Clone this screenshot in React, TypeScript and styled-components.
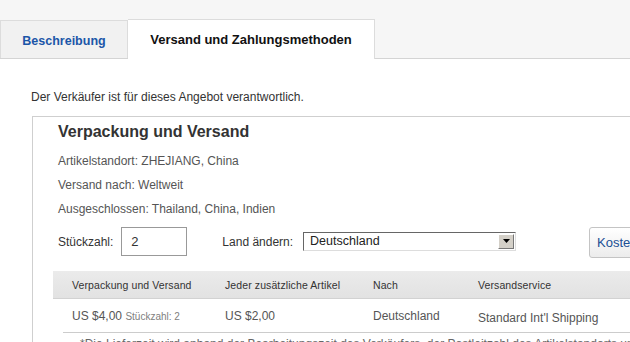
import styled, { createGlobalStyle } from "styled-components"

const GlobalStyle = createGlobalStyle`
  html, body {
    margin: 0;
    padding: 0;
    background: #fff;
    font-family: "Liberation Sans", Arial, sans-serif;
  }
`

const columns = [
  { label: "Verpackung und Versand", width: 153 },
  { label: "Jeder zusätzliche Artikel", width: 148 },
  { label: "Nach", width: 105 },
  { label: "Versandservice", width: 200 },
]

function App() {
  return (
    <>
      <GlobalStyle />
      <PageStyle>
        <TabBar>
          <Tab>Beschreibung</Tab>
          <Tab active>Versand und Zahlungsmethoden</Tab>
        </TabBar>

        <Content>
          <p className="seller">Der Verkäufer ist für dieses Angebot verantwortlich.</p>

          <ShippingBox>
            <h2>Verpackung und Versand</h2>
            <InfoLine>Artikelstandort: ZHEJIANG, China</InfoLine>
            <InfoLine>Versand nach: Weltweit</InfoLine>
            <InfoLine>Ausgeschlossen: Thailand, China, Indien</InfoLine>

            <FormRow>
              <label>Stückzahl:</label>
              <QtyInput defaultValue="2" />
              <label className="country">Land ändern:</label>
              <FakeSelect>
                <span>Deutschland</span>
                <div className="arrow">
                  <svg width="7" height="4" viewBox="0 0 7 4">
                    <path d="M0 0h7L3.5 4z" fill="#000" />
                  </svg>
                </div>
              </FakeSelect>
              <CostButton>Kosten berechnen</CostButton>
            </FormRow>

            <TableHead>
              {columns.map((c) => (
                <HeadCell key={c.label} width={c.width}>
                  {c.label}
                </HeadCell>
              ))}
            </TableHead>

            <TableRow>
              <Cell width={153}>
                US $4,00 <small>Stückzahl: 2</small>
              </Cell>
              <Cell width={148}>US $2,00</Cell>
              <Cell width={105}>Deutschland</Cell>
              <Cell width={200} shift={2}>
                Standard Int'l Shipping
              </Cell>
            </TableRow>

            <Footnote>
              *Die Lieferzeit wird anhand der Bearbeitungszeit des Verkäufers, der Postleitzahl des Artikelstandorts und der Zielpostleitzahl berechnet.
            </Footnote>
          </ShippingBox>
        </Content>
      </PageStyle>
    </>
  )
}

const PageStyle = styled.div`
  width: 630px;
  height: 342px;
  overflow: hidden;
  background: #fff;
`

const TabBar = styled.div`
  display: flex;
  align-items: flex-end;
  height: 59px;
  box-sizing: border-box;
  padding-top: 20px;
  background: #f6f6f6;
  border-bottom: 1px solid #d4d4d4;
`

const Tab = styled.div<{ active?: boolean }>`
  box-sizing: border-box;
  display: flex;
  align-items: center;
  justify-content: center;
  width: ${({ active }) => (active ? "247px" : "128px")};
  height: ${({ active }) => (active ? "40px" : "38px")};
  margin-bottom: ${({ active }) => (active ? "-1px" : "0")};
  background: ${({ active }) => (active ? "#fff" : "#f1f1f1")};
  border: 1px solid #dcdcdc;
  border-bottom: none;
  border-left: ${({ active }) => (active ? "none" : "1px solid #dcdcdc")};
  font-size: ${({ active }) => (active ? "13px" : "12.5px")};
  font-weight: bold;
  color: ${({ active }) => (active ? "#111" : "#1b56a8")};
  padding-top: ${({ active }) => (active ? "0" : "2px")};
`

const Content = styled.div`
  padding: 31px 0 0 31px;

  .seller {
    margin: 0;
    font-size: 12px;
    line-height: 14px;
    color: #333;
  }
`

const ShippingBox = styled.div`
  margin: 12px 0 0 1px;
  width: 700px;
  border-top: 1px solid #cfcfcf;
  border-left: 1px solid #cfcfcf;
  padding: 5px 0 0 25px;

  h2 {
    margin: 0 0 7px;
    font-size: 16px;
    line-height: 20px;
    font-weight: bold;
    color: #333;
  }
`

const InfoLine = styled.div`
  font-size: 12px;
  line-height: 24px;
  color: #555;
`

const FormRow = styled.div`
  display: flex;
  align-items: center;
  height: 30px;
  margin-top: 6px;
  font-size: 12px;
  color: #333;

  label {
    margin-right: 8px;
  }

  .country {
    margin-left: 35px;
    margin-right: 10px;
  }
`

const QtyInput = styled.input`
  box-sizing: border-box;
  width: 66px;
  height: 29px;
  margin-top: -1px;
  border: 1px solid #999;
  padding: 0 0 0 9px;
  font-family: "Liberation Sans", Arial, sans-serif;
  font-size: 13px;
  color: #333;
  outline: none;
`

const FakeSelect = styled.div`
  box-sizing: border-box;
  display: flex;
  align-items: center;
  width: 213px;
  height: 19px;
  margin-top: -2px;
  border: 1px solid;
  border-color: #666 #ddd #ddd #666;
  padding: 0 1px 0 6px;
  background: #fff;
  font-size: 12.5px;
  color: #222;

  span {
    flex: 1;
  }

  .arrow {
    box-sizing: border-box;
    width: 16px;
    height: 15px;
    display: flex;
    align-items: center;
    justify-content: center;
    background: #d4d0c8;
    border: 1px solid;
    border-color: #fff #777 #777 #fff;
  }
`

const CostButton = styled.button`
  box-sizing: border-box;
  margin-left: 73px;
  height: 31px;
  padding: 0 7px;
  border: 1px solid #c4c4c4;
  border-radius: 3px;
  background: linear-gradient(#ffffff, #ececec);
  font-family: "Liberation Sans", Arial, sans-serif;
  font-size: 13px;
  color: #1b4f94;
  white-space: nowrap;
`

const TableHead = styled.div`
  display: flex;
  align-items: center;
  height: 27px;
  margin: 14px 0 0 -5px;
  background: linear-gradient(#ebebeb, #e2e2e2);
  border-bottom: 1px solid #d2d2d2;
`

const HeadCell = styled.div<{ width: number }>`
  flex: 0 0 ${({ width }) => width}px;
  box-sizing: border-box;
  padding-left: 19px;
  font-size: 10.5px;
  letter-spacing: 0.1px;
  color: #333;
  white-space: nowrap;
`

const TableRow = styled.div`
  display: flex;
  align-items: center;
  height: 33px;
  margin-left: 5px;
  border-bottom: 1px solid #ccc;
`

const Cell = styled.div<{ width: number; shift?: number }>`
  flex: 0 0 ${({ width }) => width}px;
  box-sizing: border-box;
  padding-left: 9px;
  padding-top: ${({ shift }) => (shift ? shift * 2 : 0)}px;
  font-size: 12px;
  color: #555;
  white-space: nowrap;

  small {
    font-size: 10px;
    color: #808080;
  }
`

const Footnote = styled.div`
  margin: 4px 0 0 22px;
  font-size: 12px;
  line-height: 14px;
  color: #666;
  white-space: nowrap;
`

export default App
